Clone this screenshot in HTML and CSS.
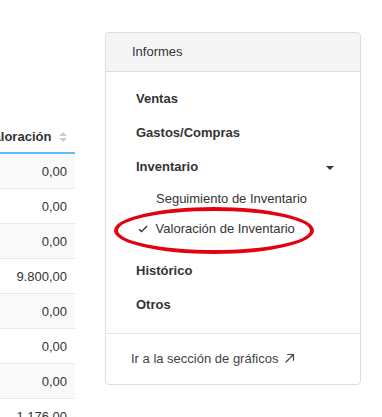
FILE: index.html
```html
<!DOCTYPE html>
<html lang="es">
<head>
  <meta charset="UTF-8">
  <title>Informes</title>
  <link rel="stylesheet" href="styles.css">
</head>
<body>

  <div class="page">

    <div class="table-wrap">
      <table class="report-table">
        <thead>
          <tr>
            <th>Valoración <span class="sort-icon"></span></th>
          </tr>
        </thead>
        <tbody>
          <tr class="odd"><td>0,00</td></tr>
          <tr><td>0,00</td></tr>
          <tr class="odd"><td>0,00</td></tr>
          <tr><td>9.800,00</td></tr>
          <tr class="odd"><td>0,00</td></tr>
          <tr><td>0,00</td></tr>
          <tr class="odd"><td>0,00</td></tr>
          <tr><td>1.176,00</td></tr>
        </tbody>
      </table>
    </div>

    <div class="panel">
      <div class="panel-heading">Informes</div>

      <ul class="menu">
        <li class="menu-item">Ventas</li>
        <li class="menu-item">Gastos/Compras</li>
        <li class="menu-item has-caret">Inventario <span class="caret"></span></li>
        <li class="sub-item">Seguimiento de Inventario</li>
        <li class="sub-item active">
          <svg class="check" width="10" height="8" viewBox="0 0 10 8"><path d="M1 4.2 L3.6 6.6 L9 1" fill="none" stroke="#1d2b3a" stroke-width="1.3"/></svg>
          Valoración de Inventario
        </li>
        <li class="menu-item spaced">Histórico</li>
        <li class="menu-item">Otros</li>
      </ul>

      <div class="panel-footer">
        Ir a la sección de gráficos
        <svg class="arrow" width="11" height="11" viewBox="0 0 11 11"><path d="M1.5 9.5 L9 2 M3.2 1.5 H9.5 V7.8" fill="none" stroke="#444" stroke-width="1.2"/></svg>
      </div>

      <!-- red annotation circle -->
      <div class="highlight"></div>
    </div>

  </div>

</body>
</html>
```

FILE: styles.css
```css
body{
  margin: 0;
  background-color: #fff;
  font-family: "Liberation Sans", Arial, sans-serif;
  font-size: 13px;
  color: #333;
}
.page{
  display: flex;
  align-items: flex-start;
}
.table-wrap{
  width: 75px;
  height: 417px;
  overflow: hidden;
  display: flex;
  justify-content: flex-end;
  padding-top: 120px;
  box-sizing: border-box;
}
.report-table{
  border-collapse: collapse;
  flex-shrink: 0;
  width: 160px;
}
.report-table th{
  height: 32px;
  padding: 0 8px 0 0;
  text-align: right;
  font-weight: bold;
  border-bottom: 2px solid #5bc0f8;
  white-space: nowrap;
}
.sort-icon{
  display: inline-block;
  width: 8px;
  height: 10px;
  margin-left: 4px;
  vertical-align: -1px;
  position: relative;
}
.sort-icon::before,
.sort-icon::after{
  content: "";
  position: absolute;
  left: 0;
  border-left: 4px solid transparent;
  border-right: 4px solid transparent;
}
.sort-icon::before{
  top: 0;
  border-bottom: 4px solid #ccc;
}
.sort-icon::after{
  bottom: 0;
  border-top: 4px solid #ccc;
}
.report-table td{
  height: 34px;
  padding: 0 8px 0 0;
  text-align: right;
  border-bottom: 1px solid #e8e8e8;
}
.report-table .odd td{
  background-color: #f9f9f9;
}

.panel{
  position: relative;
  margin-left: 30px;
  margin-top: 32px;
  width: 256px;
  border: 1px solid #ddd;
  border-radius: 4px;
  box-sizing: border-box;
  background-color: #fff;
}
.panel-heading{
  height: 38px;
  line-height: 38px;
  padding-left: 26px;
  background-color: #f5f5f5;
  border-bottom: 1px solid #ddd;
  border-radius: 4px 4px 0 0;
}
.menu{
  list-style: none;
  margin: 0;
  padding: 10px 0 11px 0;
  border-bottom: 1px solid #e6e6e6;
}
.menu-item{
  height: 34px;
  line-height: 34px;
  padding-left: 30px;
  font-weight: bold;
}
.menu-item.spaced{
  margin-top: 10px;
}
.has-caret{
  position: relative;
}
.caret{
  position: absolute;
  right: 26px;
  top: 16px;
  border-left: 4px solid transparent;
  border-right: 4px solid transparent;
  border-top: 4px solid #333;
}
.sub-item{
  height: 30px;
  line-height: 30px;
  padding-left: 50px;
}
.sub-item.active{
  padding-left: 32px;
}
.check{
  margin-right: 4px;
  vertical-align: 0;
}
.panel-footer{
  height: 50px;
  line-height: 50px;
  padding-left: 25px;
  color: #444;
}
.arrow{
  vertical-align: -1px;
  margin-left: 2px;
}
.highlight{
  position: absolute;
  left: 8px;
  top: 174px;
  width: 200px;
  height: 47px;
  border: 4px solid #e3000f;
  border-radius: 50%;
  box-sizing: border-box;
}
```
